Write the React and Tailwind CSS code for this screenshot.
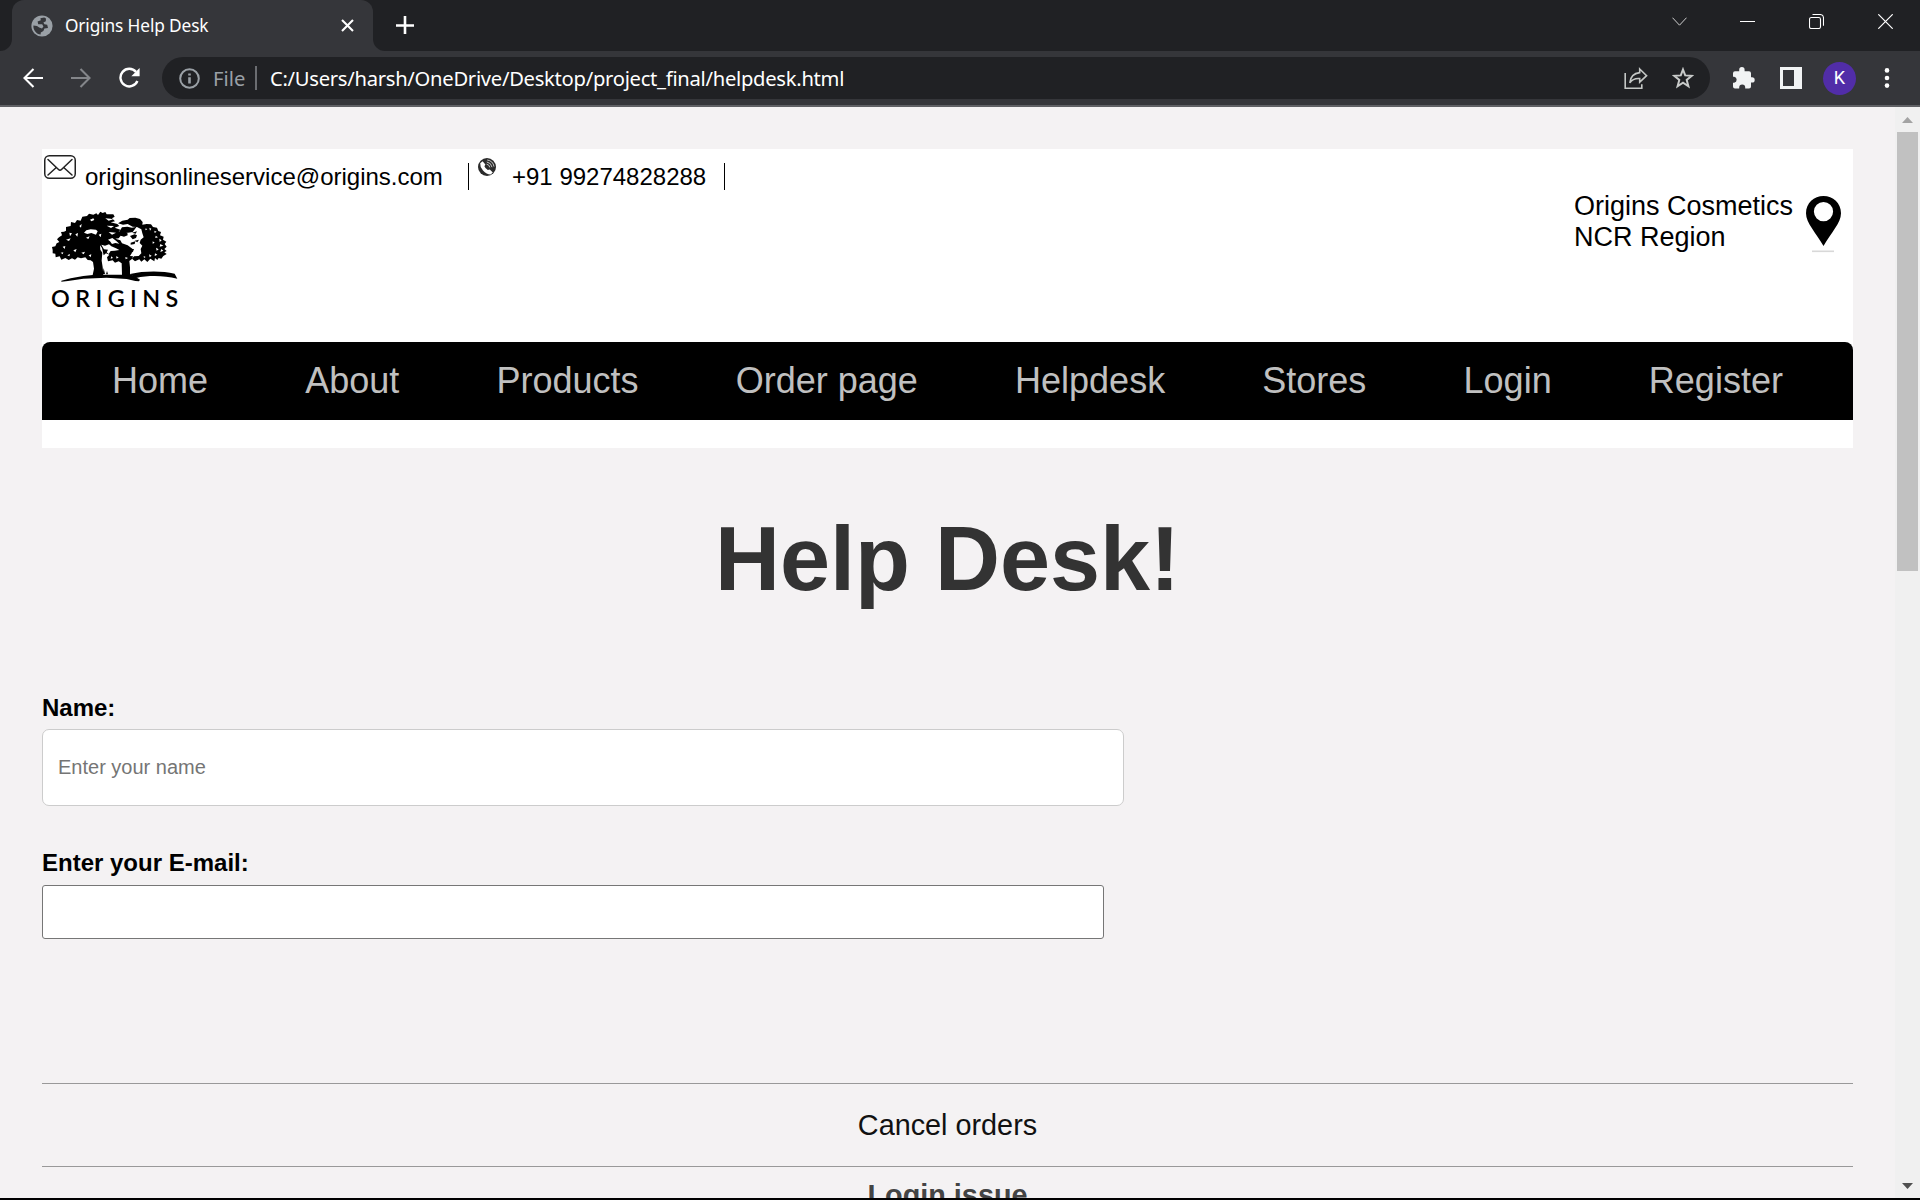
import React from "react";

const ARIAL = "font-['Liberation_Sans',Arial,sans-serif]";

function Globe() {
  return (
    <svg className="ml-[19px] h-[22px] w-[22px] shrink-0" viewBox="0 0 22 22">
      <circle cx="11" cy="11" r="10.6" fill="#9aa0a6" />
      <path
        d="M13.2 2.4 9.4 3.2 9.8 5.2 6.6 6.4 7.2 9.2H11.2L12.4 11.6 11 13.4 8.2 12.6 6 11 2.4 10.4C2 15 5.4 19 9.6 19.6L9.8 17.4 12.4 16 13.4 13.6 17 13 16.2 9.8 13.4 9.2 12.4 7.4 14.8 6.2 15 3.4Z"
        fill="#35363a"
      />
    </svg>
  );
}

function TabStrip() {
  return (
    <div className="flex h-[51px] items-start bg-[#202124]">
      <div className="h-[51px] w-3 bg-[#35363a]">
        <div className="h-full rounded-br-[12px] bg-[#202124]" />
      </div>
      <div className="flex h-[51px] w-[361px] items-center rounded-t-[12px] bg-[#35363a]">
        <Globe />
        <span className="ml-[12px] w-[276px] whitespace-nowrap text-[17.3px] leading-6 tracking-[-0.13px] text-white">
          Origins Help Desk
        </span>
        <svg className="h-[13px] w-[13px] shrink-0" viewBox="0 0 13 13" stroke="#fff" strokeWidth="2.1">
          <path d="M1 1 12 12M12 1 1 12" />
        </svg>
      </div>
      <div className="h-[51px] w-3 bg-[#35363a]">
        <div className="h-full rounded-bl-[12px] bg-[#202124]" />
      </div>
      <svg className="ml-[11px] mt-[16px] h-[18px] w-[18px]" viewBox="0 0 18 18" stroke="#fff" strokeWidth="2.6">
        <path d="M9 0V18M0 9.5H18" />
      </svg>
      <svg className="ml-auto mt-[17px] h-[9px] w-[15px]" viewBox="0 0 15 9" fill="none" stroke="#cfcfcf" strokeWidth="1">
        <path d="M.5 .7 7.5 8.2 14.5 .7" />
      </svg>
      <svg className="ml-[53px] mt-[21px] h-px w-[15px]" viewBox="0 0 15 1">
        <rect width="15" height="1" fill="#fff" />
      </svg>
      <svg className="ml-[54px] mt-[14px] h-[15px] w-[15px]" viewBox="0 0 15 15" fill="none" stroke="#fff" strokeWidth="1.1">
        <rect x=".5" y="3.5" width="11" height="11" rx="1.8" />
        <path d="M3.5 .5H11Q14.5 .5 14.5 4V11.8" />
      </svg>
      <svg className="ml-[54px] mr-[27px] mt-[14px] h-[15px] w-[15px]" viewBox="0 0 15 15" stroke="#fff" strokeWidth="1.2">
        <path d="M.3 .3 14.7 14.7M14.7 .3 .3 14.7" />
      </svg>
    </div>
  );
}

function Toolbar() {
  return (
    <div className="flex h-[56px] items-center border-b-2 border-[#5f6064] bg-[#35363a]">
      <svg className="ml-[23px] h-5 w-5" viewBox="0 0 20 20" fill="none" stroke="#fff" strokeWidth="2.1">
        <path d="M10.5 1 1.5 10 10.5 19M1.5 10H20" />
      </svg>
      <svg className="ml-7 h-5 w-5" viewBox="0 0 20 20" fill="none" stroke="#84868a" strokeWidth="2.1">
        <path d="M9.5 1 18.5 10 9.5 19M18.5 10H0" />
      </svg>
      <svg className="ml-7 h-[22px] w-[22px]" viewBox="0 0 22 22" fill="none">
        <path d="M17 4.9A8.8 8.8 0 1 0 18.4 14" stroke="#fff" strokeWidth="2.4" />
        <path d="M20.6 1V9.3H12.3Z" fill="#fff" />
      </svg>
      <div className="ml-[21px] flex h-[42px] w-[1548px] items-center rounded-full bg-[#202124]">
        <svg className="ml-[17px] h-[21px] w-[21px]" viewBox="0 0 21 21" fill="none" stroke="#9aa0a6" strokeWidth="2">
          <circle cx="10.5" cy="10.5" r="9.3" />
          <path d="M10.5 9.3V15.5M10.5 5.4V7.6" strokeWidth="2.6" />
        </svg>
        <span className="ml-[13px] w-[42px] text-[20.2px] leading-[42px] text-[#9aa0a6]">File</span>
        <div className="h-6 w-[2px] bg-[#6b6d71]" />
        <span className="ml-[13px] whitespace-nowrap text-[20.2px] leading-[42px] tracking-[-0.28px] text-white">
          C:/Users/harsh/OneDrive/Desktop/project_final/helpdesk.html
        </span>
        <svg className="ml-auto h-[23px] w-[24px]" viewBox="0 0 24 23" fill="none" stroke="#c4c7c5" strokeWidth="1.6">
          <path d="M1.2 6V21.3H17.8V17.2" />
          <path d="M15.7 2 22.6 8.7 15.7 15.2V11.6C11 11.2 8.2 12.3 5.8 15.8 6.4 9.8 9.8 6.3 15.7 5.6Z" />
        </svg>
        <svg className="ml-[24px] mr-[16px] h-[22px] w-[22px]" viewBox="0 0 22 22" fill="none" stroke="#c9cbca" strokeWidth="2">
          <path d="M11 2.5 13.2 8.4 19.8 8.8 14.7 12.9 16.4 19.3 11 15.7 5.6 19.3 7.3 12.9 2.2 8.8 8.8 8.4Z" />
        </svg>
      </div>
      <svg className="ml-[23px] h-[22px] w-[22px]" viewBox="0 0 22 22" fill="#f1f3f4">
        <path d="M2 4.3H6.2V2.7A2.7 2.7 0 0 1 11.6 2.7V4.3H16Q18 4.3 18 6.3V10.2H19A2.7 2.7 0 0 1 19 15.6H18V19.5Q18 21.5 16 21.5H12.2V20.4A3 3 0 0 0 6.2 20.4V21.5H2Q0 21.5 0 19.5V15.7H1.2A3 3 0 0 0 1.2 9.8H0V6.3Q0 4.3 2 4.3Z" />
      </svg>
      <svg className="ml-[25px] h-[22px] w-[22px]" viewBox="0 0 22 22">
        <path fillRule="evenodd" d="M0 0H22V22H0ZM3 3V19H14V3Z" fill="#f1f3f4" />
      </svg>
      <div className="ml-[21px] flex h-[33px] w-[33px] items-center justify-center rounded-full bg-[#512da8] font-['Roboto',sans-serif] text-[18px] leading-none text-white">
        K
      </div>
      <svg className="ml-[28px] h-[20px] w-[6px]" viewBox="0 0 6 20" fill="#fff">
        <circle cx="3" cy="2.4" r="2.3" />
        <circle cx="3" cy="10" r="2.3" />
        <circle cx="3" cy="17.6" r="2.3" />
      </svg>
    </div>
  );
}

function OriginsLogo() {
  return (
    <svg className="h-[120px] w-[150px]" viewBox="0 0 450 360">
      {/* left tree */}
      <path
        d="M38 150 36 141 46 139 50 130 58 126 51 118 57 112 66 106 63 96 72 95 78 92 78 81 92 78 93 66 105 69 111 60 122 62 127 50 141 48 147 41 160 44 169 40 174 45 181 35 188 39 196 36 200 43 220 43 224 50 216 55 225 64 212 67 232 72 238 78 224 83 241 89 236 96 250 92 262 98 263 106 252 110 242 107 236 115 226 116 241 121 246 130 263 136 277 146 268 152 276 158 270 168 279 169 277 176 268 183 270 202 270 222 284 229 300 239 297 244 286 243 260 237 200 233 130 236 84 243 64 245 64 242 92 235 130 228 158 225 162 206 159 186 152 181 143 180 136 172 123 175 113 172 105 179 96 175 86 180 76 174 64 179 59 169 47 172 46 161 38 160ZM186 144 180 136 181 149 187 158 185 182 188 202 190 224 246 224 245 190 236 184 225 188 218 181 204 184 201 172 208 164 198 160 191 166Z"
        fillRule="evenodd"
      />
      {/* right tree */}
      <path d="M234 70 247 62 263 59 269 54 286 53 300 57 308 66 307 74 320 72 333 73 339 81 351 83 355 93 363 96 360 106 371 110 369 119 379 125 374 132 380 140 373 147 380 153 373 157 380 162 370 168 364 176 356 174 352 180 345 174 343 184 331 176 322 186 313 178 304 185 298 178 285 184 276 176 282 169 296 168 304 160 302 147 307 137 299 129 302 119 311 112 307 100 304 88 291 81 278 80 263 72 249 74Z" />
      {/* face between the crowns */}
      <path d="M236 98 246 82 262 80 276 83 290 80 278 96 264 98ZM276 98 291 94 287 101ZM270 108 284 103 291 106 288 114 278 118ZM272 128 286 124 284 132 272 134ZM244 139 252 150 264 146 282 147 279 155 266 164 248 158 232 153ZM284 122 297 119 292 127Z" />
      {/* ground */}
      <path d="M270 222C310 213 365 212 404 221L412 236C370 226 325 226 288 234Z" />
      <path d="M188 222 191 204 195 222ZM198 223 201 213 204 223Z" />
      {/* light showing through the leaves */}
      <g fill="#fff">
        <path d="M132 98 139 91 152 88 168 89 173 94 168 104 154 99 142 102Z" />
        <path d="M184 134 195 137 207 133 214 139 228 145 238 150 224 152 212 153 206 162 200 157 204 149 192 148Z" />
        <path d="M204 119 217 114 228 122 238 131 226 129 216 132 210 124Z" />
        <path d="M196 55 212 56 220 58 206 62ZM200 77 222 78 213 84ZM206 96 228 98 216 104ZM150 59 160 55 163 60 154 64ZM118 78 125 72 123 83Z" />
        <path d="M88 98 96 100 90 109ZM106 103 114 99 112 110ZM78 119 92 115 87 123ZM68 140 76 138 74 147ZM62 158 70 157 68 163ZM100 151 110 147 106 157ZM124 158 135 155 131 163ZM82 166 90 162 88 169ZM176 104 184 101 182 112ZM146 166 154 163 152 172ZM138 113 149 109 145 117Z" />
        <path d="M328 83 334 86 330 92ZM343 92 350 95 344 99ZM347 107 354 112 346 114ZM358 116 365 121 359 126ZM361 132 370 137 359 140ZM348 143 356 148 350 152ZM364 147 370 152 361 156ZM345 160 352 164 344 168ZM327 163 335 167 329 172ZM311 168 317 171 312 174ZM338 124 344 128 338 131ZM317 85 322 88 316 91Z" />
        <path d="M228 169 236 172 230 176ZM256 171 264 174 257 178ZM214 169 219 174 212 176Z" />
      </g>
      <text
        x="33"
        y="320"
        textLength="382"
        lengthAdjust="spacing"
        className="font-['Lato',sans-serif] text-[70px] font-semibold"
      >
        ORIGINS
      </text>
    </svg>
  );
}

const NAV = ["Home", "About", "Products", "Order page", "Helpdesk", "Stores", "Login", "Register"];

function SiteHeader() {
  return (
    <header className="h-[299px] bg-white">
      <div className="flex h-[193px] items-start justify-between">
        <div>
          <div className="flex h-[51px] items-start text-2xl leading-7 text-black">
            <svg className="ml-[2px] mt-[6px] h-6 w-8" viewBox="0 0 32 24" fill="none" stroke="#222" strokeWidth="1.5">
              <rect x=".75" y=".75" width="30.5" height="22.5" rx="4.5" />
              <path d="M4 4.5 14.5 14.5Q16 16 17.5 14.5L28 4.5M4 20 12.3 12.5M28 20 19.7 12.5" strokeLinecap="round" />
            </svg>
            <span className="ml-[9px] mt-[14px] w-[383px]">originsonlineservice@origins.com</span>
            <div className="mt-[14px] h-[27px] w-px bg-black" />
            <svg className="ml-[9px] mt-[9px] h-[18px] w-[18px]" viewBox="0 0 18 18" fill="none">
              <circle cx="9" cy="9" r="9" fill="#2b2b2b" />
              <path d="M2.2 5.2 4.6 3.2 7.4 6.4 6.4 8.2Q7.4 10.6 9.8 12L11.8 11.4 14.8 14.4 12.6 16.4Q8.6 16.2 5 12.4 1.8 8.8 2.2 5.2Z" fill="#fff" />
              <path d="M8.6 6.2Q11.4 6.6 11.8 9.4M8.8 4Q13.2 4.6 14 9.2M9.2 2Q15 2.8 16 8.6" stroke="#c4c4c4" strokeWidth="1" />
            </svg>
            <span className="ml-4 mt-[14px] w-[212px]">+91 99274828288</span>
            <div className="mt-[14px] h-[27px] w-px bg-black" />
          </div>
          <div className="-ml-[2px]">
            <OriginsLogo />
          </div>
        </div>
        <div className="mt-[42px] flex items-start text-[27px] leading-[31px] text-black">
          <div className="w-[232px]">
            <div>Origins Cosmetics</div>
            <div>NCR Region</div>
          </div>
          <svg className="mr-[12px] mt-1 h-[58px] w-[35px]" viewBox="0 0 35 58">
            <path fillRule="evenodd" d="M17.5 1C27 1 35 8 35 18.3 35 28 25 38 17.5 51 10 38 0 28 0 18.3 0 8 8 1 17.5 1ZM17.5 7A9.6 9.6 0 1 0 17.5 26.2 9.6 9.6 0 1 0 17.5 7Z" />
            <rect x="6" y="55.5" width="22" height="1.6" fill="#d8d8d8" />
          </svg>
        </div>
      </div>
      <nav className="flex h-[78px] items-center justify-between rounded-t-[8px] bg-black px-[70px] text-4xl leading-[78px] text-[#c0c0c0]">
        {NAV.map((item) => (
          <a key={item}>{item}</a>
        ))}
      </nav>
    </header>
  );
}

function Scrollbar() {
  return (
    <div className="flex w-[25px] flex-col items-center bg-[#f0f0f0]">
      <svg className="mt-[10px] h-[6px] w-[11px]" viewBox="0 0 11 6">
        <path d="M0 6 5.5 0 11 6Z" fill="#a3a3a3" />
      </svg>
      <div className="mt-[9px] h-[439px] w-[21px] bg-[#c1c1c1]" />
      <svg className="mb-[9px] mt-auto h-[6px] w-[11px]" viewBox="0 0 11 6">
        <path d="M0 0H11L5.5 6Z" fill="#505050" />
      </svg>
    </div>
  );
}

export default function App() {
  return (
    <div className="flex h-[1200px] w-[1920px] flex-col overflow-hidden bg-black font-['Noto_Sans','Open_Sans',sans-serif]">
      <TabStrip />
      <Toolbar />
      <div className={`flex h-[1091px] overflow-hidden bg-[#f4f2f3] ${ARIAL}`}>
        <main className="w-[1895px] pl-[42px] pr-[42px] pt-[42px]">
          <SiteHeader />
          <h1 className="mt-[59px] h-[104px] text-center text-[90px] font-bold leading-[104px] text-[#333]">
            Help Desk!
          </h1>
          <label className="mt-[83px] block text-2xl font-bold leading-7 text-black">Name:</label>
          <input
            className="mt-[7px] block h-[77px] w-[1082px] rounded-[7px] border border-[#ccc] bg-white px-[15px] text-xl placeholder:text-[#757575]"
            placeholder="Enter your name"
          />
          <label className="mt-[43px] block text-2xl font-bold leading-7 text-black">Enter your E-mail:</label>
          <input className="mt-2 block h-[54px] w-[1062px] rounded-[3px] border border-[#767676] bg-white px-3" />
          <div className="mt-[144px] h-px bg-[#999]" />
          <div className="h-[82px] text-center text-[28.8px] leading-[82px] text-[#111]">Cancel orders</div>
          <div className="h-px bg-[#999]" />
          <div className="mt-[12px] text-center text-[28.8px] font-bold leading-[33px] text-[#444]">Login issue</div>
        </main>
        <Scrollbar />
      </div>
    </div>
  );
}
